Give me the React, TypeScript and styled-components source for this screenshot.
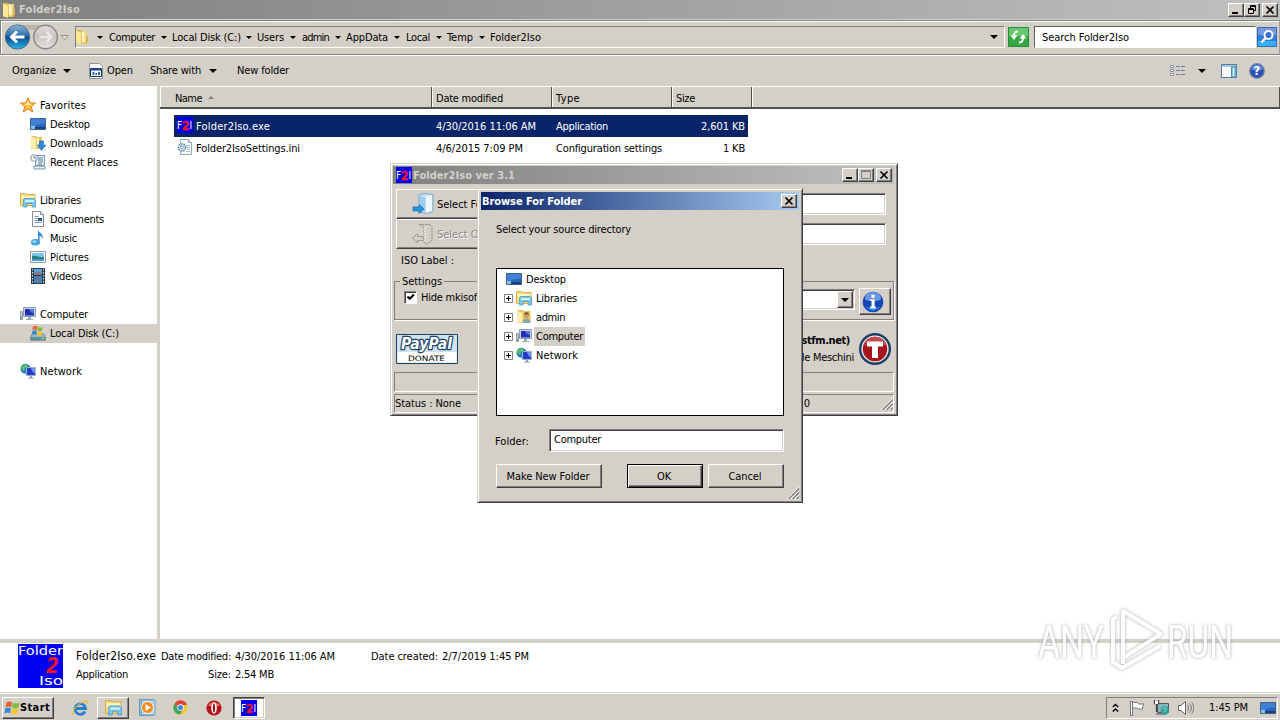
import React, { useLayoutEffect, useRef } from "react";
import styled, { createGlobalStyle, css } from "styled-components";

const face = "#d4d0c8";

const GlobalStyle = createGlobalStyle`
  * {
    box-sizing: border-box;
  }

  body {
    margin: 0;
    overflow: hidden;
    background: #fff;
    color: #000;
    font: 11px/13px "DejaVu Sans Condensed", "DejaVu Sans", sans-serif;
  }

  svg {
    display: block;
    flex: none;
  }
`;

/* ---------- text ---------- */

const LabelText = styled.span<{ $bold?: boolean; $size?: number }>`
  flex: none;
  align-self: center;
  white-space: nowrap;
  font-weight: ${(p) => (p.$bold ? 700 : 400)};
  font-size: ${(p) => p.$size || 11}px;
`;

type LabelProps = {
  w?: number;
  bold?: boolean;
  size?: number;
  children: string;
};

// spreads the letters so the label takes exactly w pixels
const Label = ({ w, bold, size, children }: LabelProps) => {
  const ref = useRef<HTMLSpanElement>(null);

  useLayoutEffect(() => {
    const el = ref.current;
    if (!el || !w) return;
    el.style.letterSpacing = "0px";
    const gap = (w - el.getBoundingClientRect().width) / children.length;
    el.style.letterSpacing = `${gap}px`;
  }, [w, children]);

  return (
    <LabelText ref={ref} $bold={bold} $size={size}>
      {children}
    </LabelText>
  );
};

/* ---------- icons ---------- */

type IconProps = { size?: number };

const FolderIcon = ({ size = 16 }: IconProps) => (
  <svg width={size} height={size} viewBox="0 0 16 16">
    <path d="M2 1h5l1 1h5v13H2z" fill="#dcb64c" />
    <path d="M7 2h6v11l-5 2z" fill="#f0d67c" />
    <path d="M2 1.500l5 2V16l-5-2z" fill="#f9e795" />
    <path d="M8 3h2.500v10H8z" fill="#fff6c4" />
    <path d="M12 7h2v6l-2 1z" fill="#dcb64c" />
  </svg>
);

const StarIcon = () => (
  <svg width="16" height="16" viewBox="0 0 16 16">
    <path
      d="M8 .8l2 5 5.400.400-4.200 3.500 1.500 5.300L8 12l-4.700 3 1.500-5.300L.6 6.200 6 5.800z"
      fill="#fdc04a"
      stroke="#e07f1a"
      strokeWidth="1"
    />
    <path d="M8 3.500l1.200 3.300 2.800.3-4 1.400-4-1.400 2.800-.3z" fill="#ffeeb0" />
  </svg>
);

const DesktopIcon = () => (
  <svg width="16" height="16" viewBox="0 0 16 16">
    <path d="M.5 2.500h15v11H.5z" fill="#2a66c0" stroke="#3f607f" />
    <path d="M1 3h14v5C10 7 5 9 1 12z" fill="#4080d6" />
    <path d="M1 11h14v2H1z" fill="#1b3f7d" />
    <path d="M1 10h4v3H1z" fill="#86c4e4" />
  </svg>
);

const DownloadsIcon = () => (
  <svg width="16" height="16" viewBox="0 0 16 16">
    <path d="M1 1h5l1 1h5v12H1z" fill="#e9c964" />
    <path d="M1 1.500l5 2V15l-5-2z" fill="#faeeb0" />
    <path d="M7 3h2v9H7z" fill="#fff3bd" />
    <path d="M9.500 6h4v4h2.300l-4.300 5.500L7.200 10h2.300z" fill="#2b8fe0" stroke="#1762a8" strokeWidth=".6" />
  </svg>
);

const RecentIcon = () => (
  <svg width="16" height="16" viewBox="0 0 16 16">
    <path d="M5.500 1.500h9v10h-9zM4 12h11v3H4z" fill="#e4edf3" stroke="#7d94a6" />
    <path d="M8 4h5M8 6h5M8 8h5M8 10h4" stroke="#5a83a8" />
    <circle cx="4" cy="4" r="3.300" fill="#f4f8fa" stroke="#8296a4" />
    <path d="M4 2v2h2" stroke="#456" fill="none" strokeWidth=".8" />
  </svg>
);

const LibrariesIcon = ({ size = 16 }: IconProps) => (
  <svg width={size} height={size} viewBox="0 0 16 16">
    <path d="M.5 1.500h5l1 1h8.500v11H.5z" fill="#f5dd83" stroke="#d5b04a" />
    <path d="M1 4h13.500v2.500H1z" fill="#fff3bd" />
    <path d="M3.500 8l1-1.500h9.500l1.500 1.500v7h-3.500v-3.500H7V15H3.500z" fill="#7cc6ea" stroke="#4a9cc9" strokeWidth=".8" />
    <path d="M5 8h9v2H5z" fill="#d0effc" />
  </svg>
);

const DocumentIcon = () => (
  <svg width="16" height="16" viewBox="0 0 16 16">
    <path d="M2.500.5h8l3 3v12h-11z" fill="#fff" stroke="#7f8fa3" />
    <path d="M10.500.5v3h3" fill="#dce6f0" stroke="#7f8fa3" />
    <path d="M4.500 5.500h4M4.500 7.500h3M4.500 9.500h3M4.500 11.500h7" stroke="#7d98c4" />
    <path d="M8 7h4v3H8z" fill="#2c5597" />
  </svg>
);

const MusicIcon = () => (
  <svg width="16" height="16" viewBox="0 0 16 16">
    <path d="M8 0c1 3 6 4 4.500 9-.4-2-1.500-3-3-3.300V12H8z" fill="#2d86cf" />
    <ellipse cx="5.500" cy="12.300" rx="4.500" ry="3.200" fill="#3da2e6" />
    <ellipse cx="4.500" cy="11.500" rx="2" ry="1.200" fill="#a4dcf8" />
  </svg>
);

const PicturesIcon = () => (
  <svg width="16" height="16" viewBox="0 0 16 16">
    <path d="M.5 2.500h15v11H.5z" fill="#fff" stroke="#8b98a3" />
    <path d="M2 4h12v8H2z" fill="#7cc4ea" />
    <path d="M2 7c4-1 8 2 12 1v2H2z" fill="#2b7c77" />
    <path d="M2 10h12v2H2z" fill="#3f9bd0" />
  </svg>
);

const VideosIcon = () => (
  <svg width="16" height="16" viewBox="0 0 16 16">
    <path d="M1 0h14v16H1z" fill="#2e3b49" />
    <path d="M4 1h8v6H4z" fill="#5ca3dc" />
    <path d="M4 8h8v7H4z" fill="#3d83c8" />
    <path d="M5 5l3-2 4 3v1H4zM5 12l3-2 3 3-3 1z" fill="#a75c50" opacity=".7" />
    <path d="M2.500 1v15M13.500 1v15" stroke="#dfe7ee" strokeDasharray="1.500 1.500" />
  </svg>
);

const ComputerIcon = () => (
  <svg width="16" height="16" viewBox="0 0 16 16">
    <path d="M.5 5.500h2v8h-2z" fill="#c3ccd2" stroke="#7c8a92" strokeWidth=".8" />
    <path d="M1 11h1v2H1z" fill="#5fae48" />
    <path d="M3.500 1.500h12v9h-12z" fill="#c9d3e2" stroke="#8d9bb0" />
    <path d="M5 3h9v6.500H5z" fill="#1d2fb5" />
    <path d="M9 3h5v4c-2 0-4-1-5-4z" fill="#5876e3" />
    <path d="M8 11h3v2h2v1H6v-1h2z" fill="#99a6b6" />
  </svg>
);

const DiskIcon = () => (
  <svg width="16" height="16" viewBox="0 0 16 16">
    <path d="M2 9l-1.500 3v3.500h15V12L14 9z" fill="#9fb8c0" stroke="#68828e" strokeWidth=".7" />
    <path d="M1 12h14v3H1z" fill="#5f9399" />
    <path d="M3 1.500c1.500-1 3-1 4.500 0L7 5.200c-1.500-.8-3-.8-4.600.1z" fill="#e9622c" />
    <path d="M8 1.800c1.500.8 3 .8 4.500.1L12 5.700c-1.500.8-3 .7-4.500-.2z" fill="#80bc3a" />
    <path d="M2.300 6c1.500-.9 3-.8 4.600 0l-.5 3.700c-1.500-.8-3-.8-4.600 0z" fill="#3b86d8" />
    <path d="M7.400 6.300c1.500.8 3 .9 4.600.1l-.5 3.700c-1.500.8-3 .7-4.600-.1z" fill="#f7c42c" />
    <path d="M12 13h2v1h-2z" fill="#a6f08c" />
  </svg>
);

const NetworkIcon = () => (
  <svg width="16" height="16" viewBox="0 0 16 16">
    <circle cx="5.500" cy="5.800" r="5" fill="#1f82b8" />
    <path d="M3 2c2-1 5-1 5 1L5 5 4 8 1 5zM6 7l3 1-2 3z" fill="#5cc06a" />
    <path d="M6.500 4.500h9v8h-9z" fill="#2340c4" stroke="#9db0d2" />
    <path d="M11 5h4v5c-2 0-3-2-4-5z" fill="#6d92ee" />
    <path d="M10 13h2v1.500h2v1H8v-1h2z" fill="#8fa0b6" />
  </svg>
);

const UserFolderIcon = () => (
  <svg width="16" height="16" viewBox="0 0 16 16">
    <path d="M1.500 1h5l1 1h7v12h-13z" fill="#e7c45d" />
    <path d="M1.500 2l5 2v11l-5-2z" fill="#fbefb0" />
    <circle cx="10.500" cy="6.500" r="2.400" fill="#c79a6a" />
    <path d="M8 5.500c0-3 5-3 5 0l-2.500-.6z" fill="#69492c" />
    <path d="M6.500 14c0-6 8-6 8 0z" fill="#8ba9a4" />
  </svg>
);

const IniIcon = () => (
  <svg width="16" height="16" viewBox="0 0 16 16">
    <path d="M3.500.5h8l3 3v12h-11z" fill="#f4f8fb" stroke="#9aa8b6" />
    <path d="M11.500.5v3h3" fill="#dbe7ef" stroke="#9aa8b6" />
    <path d="M9 6.500h4M10 8.500h3M10 10.500h3M9 12.500h4" stroke="#b4c3d3" />
    <circle cx="5" cy="8.500" r="3.600" fill="#cfe2ef" stroke="#6f94b5" strokeWidth="1.600" strokeDasharray="1.700 .9" />
    <circle cx="5" cy="8.500" r="1.400" fill="#fff" stroke="#6f94b5" strokeWidth=".8" />
  </svg>
);

const AppIcon = () => (
  <svg width="16" height="16" viewBox="0 0 16 16">
    <path d="M0 0h16v16H0z" fill="#0000f0" />
    <g fontFamily="DejaVu Sans Condensed, sans-serif">
      <text x="0" y="11.500" fontSize="10" fill="#fff">F</text>
      <text x="5" y="12.500" fontSize="12" fontWeight="700" fill="#f0102c" stroke="#f0102c" strokeWidth=".4" textLength="7.500" lengthAdjust="spacingAndGlyphs">2</text>
      <text x="12.500" y="11.500" fontSize="10" fill="#fff">I</text>
    </g>
  </svg>
);

const OpenIcon = () => (
  <svg width="16" height="16" viewBox="0 0 16 16">
    <path d="M1.500.5h10l3 3v12h-13z" fill="#fff" stroke="#8d949c" />
    <path d="M2.500 5.500h11v8h-11z" fill="#fff" stroke="#14306f" />
    <path d="M3 5h10v2.500H3z" fill="#1c3f92" />
    <path d="M4.500 9h2v3h-2zM7.500 10h1.500v2H7.500zM10 9h2v3h-2z" fill="#3464b4" />
  </svg>
);

const ViewIcon = () => (
  <svg width="17" height="16" viewBox="0 0 17 16">
    <g fill="#fff" stroke="#87919c">
      <path d="M.5 2.500h3v2h-3zM.5 6.500h3v2h-3zM.5 10.500h3v2h-3z" />
    </g>
    <path d="M6 3.500h4M11 3.500h4M6 7.500h4M11 7.500h4M6 11.500h4M11 11.500h4" stroke="#6c7e96" />
  </svg>
);

const PaneIcon = () => (
  <svg width="16" height="16" viewBox="0 0 16 16">
    <path d="M.5 1.500h15v13H.5z" fill="#fff" stroke="#4d7da6" />
    <path d="M1 2h14v2H1z" fill="#a5c7dd" />
    <path d="M10.500 4v10H15V4z" fill="#84c5e2" stroke="#4d8fb5" />
    <path d="M12 5h1v8h-1z" fill="#d7f3ff" />
  </svg>
);

const HelpIcon = () => (
  <svg width="16" height="16" viewBox="0 0 16 16">
    <circle cx="8" cy="8" r="7.300" fill="#2a50b8" stroke="#7886a6" strokeWidth="1.200" />
    <path d="M2.500 6a5.600 5 0 0 1 11 0c-3 2-8 2-11 0z" fill="#6f93e0" />
    <text x="8" y="12.300" textAnchor="middle" fontSize="12" fontWeight="700" fill="#fff" fontFamily="DejaVu Sans Condensed, sans-serif">?</text>
  </svg>
);

const BackForward = () => (
  <svg width="66" height="28" viewBox="0 0 66 28">
    <defs>
      <linearGradient id="back" x1="0" y1="0" x2="0" y2="1">
        <stop offset="0" stopColor="#8fb6d6" />
        <stop offset=".45" stopColor="#2b6dab" />
        <stop offset=".5" stopColor="#0c4a8b" />
        <stop offset="1" stopColor="#2bb8ea" />
      </linearGradient>
      <linearGradient id="fwd" x1="0" y1="0" x2="0" y2="1">
        <stop offset="0" stopColor="#e2e0dc" />
        <stop offset=".5" stopColor="#c5c2bd" />
        <stop offset="1" stopColor="#e8e6e2" />
      </linearGradient>
    </defs>
    <path d="M14 2h28v5H14z" fill="#b7b4ae" />
    <circle cx="12.500" cy="14" r="12.200" fill="url(#back)" stroke="#4c6380" strokeWidth=".8" />
    <path d="M19.500 14H7M12 8.500L6.500 14l5.500 5.500" stroke="#fff" strokeWidth="3" fill="none" />
    <circle cx="40.500" cy="14" r="11.800" fill="url(#fwd)" stroke="#898681" strokeWidth="1.400" />
    <path d="M34.500 14H46M41.500 9l5 5-5 5" stroke="#e9e7e3" strokeWidth="2.600" fill="none" />
    <path d="M56 12.500h7l-3.500 4z" fill="#efede9" stroke="#918e88" />
  </svg>
);

const RefreshIcon = () => (
  <svg width="21" height="20" viewBox="0 0 21 20">
    <path d="M0 0h21v20H0z" fill="#35a843" />
    <path d="M1 1h19v8H1z" fill="#69c86d" />
    <path d="M.5.5h20v19H.5z" fill="none" stroke="#2a8b3a" />
    <path d="M10 4.500C7 4.500 6 6 6 9" stroke="#fff" strokeWidth="2" fill="none" />
    <path d="M2.500 8.500h7L6 13z" fill="#fff" />
    <path d="M11 15.500c3 0 4-1.500 4-4.500" stroke="#fff" strokeWidth="2" fill="none" />
    <path d="M11.500 11.500h7L15 7z" fill="#fff" />
  </svg>
);

const SearchIcon = () => (
  <svg width="20" height="20" viewBox="0 0 20 20">
    <path d="M0 0h20v20H0z" fill="#2f80dc" />
    <path d="M0 0h20v8H0z" fill="#7898dc" />
    <path d="M0 14h20v6H0z" fill="#35b0ee" />
    <path d="M.5.5h19v19H.5z" fill="none" stroke="#3868b8" />
    <circle cx="11.500" cy="8" r="4" fill="#3d6cc8" stroke="#fff" strokeWidth="2" />
    <path d="M8.500 11L4.500 15.500" stroke="#fff" strokeWidth="2.600" />
  </svg>
);

const ArrowFolder = ({ disabled }: { disabled?: boolean }) => (
  <svg width="24" height="24" viewBox="0 0 24 24">
    {disabled ? (
      <g fill="none" stroke="#8a8781" strokeDasharray="2 1">
        <path d="M8 2.500h11l2 2v14l-5 3.500-3-1.500V5l-4-2z" />
        <path d="M1.500 16l5-4v2.500H12v4H6.500V21z" />
        <path d="M14 5v15" stroke="#fff" />
      </g>
    ) : (
      <>
        <path d="M8 2.500l6-1 8 1v17l-7 2-7-2z" fill="#bfe0f5" stroke="#7aa9cc" />
        <path d="M15 4.500l6-1.500v16l-6 2z" fill="#eef8fe" />
        <path d="M9 4l5 2v14l-5-2z" fill="#9ccbec" />
        <path d="M2 15h6v-2.500l5 4.500-5 4.500V19H2z" fill="#2694e0" stroke="#1a6cae" strokeWidth=".7" />
      </>
    )}
  </svg>
);

const InfoIcon = () => (
  <svg width="22" height="22" viewBox="0 0 24 24">
    <circle cx="12" cy="12" r="11.300" fill="#1747b6" />
    <path d="M3 9a9 8 0 0 1 18 0c-5 3-13 3-18 0z" fill="#6b97e2" />
    <path d="M4 17c4 6 12 6 16 0-4 2-12 2-16 0z" fill="#2f83ec" />
    <path d="M10.200 4h3.600v3.300h-3.600zM9 9h4.800v8H15v2H9v-2h1.400v-6H9z" fill="#fff" />
  </svg>
);

const TrustLogo = () => (
  <svg width="32" height="32" viewBox="0 0 32 32">
    <circle cx="16" cy="16" r="16" fill="#1b3c64" />
    <circle cx="16" cy="16" r="13.600" fill="#f4f4f6" />
    <circle cx="16" cy="16" r="12.300" fill="#a5161d" />
    <path d="M5 12a11.500 11.500 0 0 1 22 0z" fill="#c5484b" />
    <path d="M8 8.500h16v5h-5V25h-6V13.500H8z" fill="#fff" />
  </svg>
);

const PayPalBadge = () => (
  <svg width="62" height="30" viewBox="0 0 62 30">
    <path d="M.5.5h61v29H.5z" fill="#cfe4f0" stroke="#1b4268" />
    <path d="M1.500 18h59v10.500h-59z" fill="#fff" />
    <text x="5" y="15" fontSize="15" fontWeight="700" fontStyle="italic" fontFamily="DejaVu Sans, sans-serif" fill="#fff" stroke="#1d4468" strokeWidth="2.600" strokeLinejoin="round" paintOrder="stroke" textLength="51" lengthAdjust="spacingAndGlyphs">PayPal</text>
    <text x="12" y="26.500" fontSize="7.500" fontFamily="DejaVu Sans, sans-serif" fill="#000" textLength="37" lengthAdjust="spacingAndGlyphs">DONATE</text>
  </svg>
);

const LargeAppIcon = () => (
  <svg width="45" height="44" viewBox="0 0 45 44">
    <path d="M0 0h45v44H0z" fill="#0000f2" />
    <g fontFamily="DejaVu Sans, sans-serif" fontSize="13" fill="#fff">
      <text x="0" y="10.500" textLength="45" lengthAdjust="spacingAndGlyphs">Folder</text>
      <text x="21" y="40.500" textLength="24" lengthAdjust="spacingAndGlyphs">Iso</text>
    </g>
    <text x="28" y="29" fontSize="22" fontWeight="700" fontStyle="italic" fontFamily="DejaVu Sans Condensed, sans-serif" fill="#ee1428" textLength="13" lengthAdjust="spacingAndGlyphs">2</text>
  </svg>
);

const WindowsFlag = () => (
  <svg width="16" height="16" viewBox="0 0 16 16">
    <path d="M2.500 2.500c2-1.300 3.700-1.200 5.500-.2L7.200 7.200c-2-1-3.600-.9-5.700.2z" fill="#e8602c" />
    <path d="M8.800 2.700c2 1.100 4 1.100 6.700-.3l-1 5.200c-2.300 1.300-4.300 1.200-6.500.1z" fill="#82bd3c" />
    <path d="M1.300 8.300c2-1.100 3.700-1 5.700 0l-.8 5c-2-1-3.700-.9-5.700.1z" fill="#3c84d8" />
    <path d="M7.900 8.700c2.200 1 4.200 1.100 6.400 0l-1 5c-2 1.100-4 1-6.200-.1z" fill="#f8c62e" />
  </svg>
);

const IeIcon = () => (
  <svg width="18" height="18" viewBox="0 0 18 18">
    <path d="M14 12.500a5.300 5.300 0 1 1 .6-3H5.500" fill="none" stroke="#2580d0" strokeWidth="2.800" />
    <path d="M1.500 16.500C-1 13 8 2 15 1.300c3 0 1.500 3.500.5 4.700.8-3-1.500-4.500-7-.5-4.500 3.500-8 9-5 9.500z" fill="#f0bd35" />
  </svg>
);

const MediaIcon = () => (
  <svg width="17" height="17" viewBox="0 0 17 17">
    <path d="M.5.5h14v16H.5z" fill="#8cc2e8" stroke="#5a95c4" />
    <path d="M2.500 1h13.500v15H2.500z" fill="#b6d9f0" stroke="#6fa3cc" />
    <circle cx="8.500" cy="8.500" r="6" fill="#f28b1a" stroke="#fff" strokeWidth=".8" />
    <path d="M6.500 5l5.500 3.500L6.500 12z" fill="#fff" />
  </svg>
);

const ChromeIcon = () => (
  <svg width="15" height="15" viewBox="0 0 16 16">
    <circle cx="8" cy="8" r="7.500" fill="#f8c932" />
    <path d="M8 8L1.300 4.400A7.500 7.500 0 0 1 15 5.300H8z" fill="#dc4437" />
    <path d="M1.300 4.400A7.500 7.500 0 0 0 7.500 15.500L10.500 9.500 8 8z" fill="#3ea455" />
    <circle cx="8" cy="8" r="3.500" fill="#fff" />
    <circle cx="8" cy="8" r="2.700" fill="#4384e8" />
  </svg>
);

const OperaIcon = () => (
  <svg width="16" height="16" viewBox="0 0 16 16">
    <circle cx="8" cy="8" r="7.600" fill="#b5121b" />
    <path d="M2 6a6.500 6 0 0 1 12 0z" fill="#e26b6b" />
    <ellipse cx="8" cy="8" rx="2.800" ry="5.700" fill="#fff" />
    <ellipse cx="8" cy="8" rx="1.100" ry="4.600" fill="#9b0d15" />
  </svg>
);

const ChevronsIcon = () => (
  <svg width="7" height="10" viewBox="0 0 7 10">
    <path d="M.8 4l2.700-2.600L6.200 4M.8 8.500l2.700-2.600 2.700 2.600" fill="none" stroke="#000" strokeWidth="1.400" />
  </svg>
);

const FlagIcon = () => (
  <svg width="16" height="16" viewBox="0 0 16 16">
    <path d="M1.500 1.500h2v14h-2z" fill="#fff" stroke="#666" strokeWidth=".9" />
    <path d="M3.500 2.500h5l1 1.500h5.500l-1.500 2.500v2.500H9L8 8H3.500z" fill="#fff" stroke="#666" strokeWidth=".9" />
  </svg>
);

const TrayNetIcon = () => (
  <svg width="17" height="17" viewBox="0 0 17 17">
    <path d="M4.500 4.500h11v9h-11z" fill="#7fb6bd" stroke="#555" />
    <path d="M3 14h9v2H3z" fill="#888" />
    <path d="M1.500 1v3.500h4V1M3.500 4.500V13" stroke="#444" fill="none" strokeWidth="1.300" />
    <path d="M2 2h3v3H2z" fill="#fff" />
    <circle cx="12" cy="11.500" r="4.300" fill="#339d9b" />
    <path d="M9.500 10c2-2 4-1 4 0s-2 1-2 3" stroke="#a9e4c0" fill="none" />
  </svg>
);

const SpeakerIcon = () => (
  <svg width="17" height="16" viewBox="0 0 17 16">
    <path d="M1.500 5.500H4L8.500 1.500v13L4 10.500H1.500z" fill="#fff" stroke="#666" />
    <path d="M10.500 5c1.500 2 1.500 4 0 6M12.500 3.500c2.500 3 2.500 6 0 9M14.500 2c3 4 3 8 0 12" fill="none" stroke="#777" />
  </svg>
);

const Grip = () => (
  <svg width="12" height="12" viewBox="0 0 12 12">
    <path d="M0 12L12 0M4 12l8-8M8 12l4-4" stroke="#fff" />
    <path d="M1.500 12L12 1.500M5.500 12L12 5.500M9.500 12L12 9.500" stroke="#808080" strokeWidth="1.300" />
  </svg>
);

const Mark = styled.svg`
  overflow: visible;
  opacity: 0.85;
  filter: drop-shadow(0 0 1.5px rgba(120, 120, 120, 0.55))
    drop-shadow(0 0 1.5px rgba(150, 150, 150, 0.3));
`;

const Watermark = () => (
  <Mark width="210" height="76" viewBox="0 0 210 76">
    <g fontFamily="Roboto, sans-serif" fontSize="46" fill="#fff">
      <text x="8" y="54" textLength="66" lengthAdjust="spacingAndGlyphs">ANY</text>
      <text x="137" y="54" textLength="66" lengthAdjust="spacingAndGlyphs">RUN</text>
    </g>
    <g fill="none" stroke="#fff" strokeWidth="4" strokeLinejoin="round">
      <path d="M93 60V7l38 23-40 25" />
      <path d="M87 13l-4 2v43l9 6 38-22" />
    </g>
  </Mark>
);

/* ---------- shared parts ---------- */

const raised = css`
  background: ${face};
  border: 1px solid;
  border-color: #fff #404040 #404040 #fff;
  box-shadow: inset -1px -1px 0 #808080;
`;

const sunken = css`
  border: 1px solid;
  border-color: #808080 #fff #fff #808080;
`;

const Caret = styled.i<{ $big?: boolean }>`
  flex: none;
  border: solid transparent;
  border-width: ${(p) => (p.$big ? "4px 4px 0" : "3px 3px 0")};
  border-top-color: #000;
`;

const TitleBar = styled.div<{ $active?: boolean; $h?: number }>`
  display: flex;
  align-items: center;
  height: ${(p) => p.$h || 18}px;
  flex: none;
  color: ${(p) => (p.$active ? "#fff" : face)};
  background: ${(p) =>
    p.$active
      ? "linear-gradient(90deg, #0a246a, #a6caf0)"
      : "linear-gradient(90deg, #808080, #c0c0c0)"};
`;

const Caption = styled.button`
  ${raised}
  display: flex;
  align-items: center;
  justify-content: center;
  width: 16px;
  height: 14px;
  padding: 0;
`;

const Captions = styled.div<{ $mr?: number }>`
  display: flex;
  margin-left: auto;
  margin-right: ${(p) => p.$mr || 2}px;

  ${Caption}:last-child {
    margin-left: 2px;
  }
`;

const CaptionGlyph = ({ kind }: { kind: "min" | "max" | "restore" | "close" }) => (
  <svg width="10" height="10" viewBox="0 0 10 10" fill="none" stroke="#000">
    {kind === "min" && <path d="M1 8h6" strokeWidth="2" />}
    {kind === "max" && <path d="M.5 1.500h9M.5.500h9v8h-9z" stroke="#808080" />}
    {kind === "restore" && <path d="M3.500 3V.5h5v5H7M3 1.500h6M1.500 3.500h5v5h-5zM1 4.500h6" />}
    {kind === "close" && <path d="M1.500 1.500l7 7M8.500 1.500l-7 7" strokeWidth="1.700" />}
  </svg>
);

const Spacer = styled.div<{ $w?: number }>`
  ${(p) => (p.$w ? `flex: none; width: ${p.$w}px;` : "flex: 1;")}
`;

/* ---------- explorer ---------- */

const Desktop = styled.div`
  position: relative;
  display: flex;
  flex-direction: column;
  width: 1280px;
  height: 720px;
  overflow: hidden;
  background: ${face};
`;

const NavBar = styled.div`
  display: flex;
  align-items: center;
  height: 35px;
  margin-top: 1px;
  padding: 0 2px 1px 4px;
  border: 1px solid #808080;
  border-right-color: #a0a0a0;
  box-shadow: inset 1px 1px 0 #fff, 0 1px 0 #fff;
  flex: none;
`;

const AddressBar = styled.div`
  ${sunken}
  display: flex;
  align-items: center;
  width: 930px;
  height: 22px;
  margin-left: 4px;
`;

const AddressFolder = styled.div`
  margin-left: -2px;
  margin-right: 1px;
`;

const CrumbArrow = styled.span<{ $w: number }>`
  display: flex;
  flex: none;
  justify-content: center;
  width: ${(p) => p.$w}px;
`;

const RefreshButton = styled.div`
  margin-left: auto;
`;

const SearchField = styled.div`
  border: 1px solid;
  border-color: #606060 #fff #fff #606060;
  display: flex;
  align-items: center;
  width: 222px;
  height: 22px;
  margin: 0 1px 0 5px;
  padding-left: 7px;
  background: #fff;
`;

const Toolbar = styled.div`
  display: flex;
  align-items: center;
  height: 31px;
  padding: 0 15px 0 12px;
  flex: none;
`;

const Main = styled.div`
  display: flex;
  height: 553px;
  flex: none;
`;

const Sidebar = styled.div`
  width: 160px;
  padding-top: 10px;
  background: linear-gradient(90deg, #fff 157px, ${face} 157px);
  flex: none;
`;

const SideGroup = styled.div`
  margin-bottom: 19px;
`;

const SideRow = styled.div<{ $child?: boolean; $selected?: boolean }>`
  display: flex;
  align-items: center;
  gap: 4px;
  height: 19px;
  padding-left: ${(p) => (p.$child ? 30 : 20)}px;
  background: ${(p) => (p.$selected ? face : "transparent")};

  > svg {
    margin-top: -2px;
  }
`;

const FilePane = styled.div`
  flex: 1;
  background: #fff;
`;

const HeaderRow = styled.div`
  display: flex;
  height: 23px;
  background: ${face};
  border-top: 1px solid #fff;
  border-bottom: 2px solid #505050;
`;

const HeaderCell = styled.div<{ $w: number; $pad?: number }>`
  display: flex;
  align-items: center;
  gap: 6px;
  width: ${(p) => p.$w}px;
  padding: 2px 0 0 ${(p) => p.$pad || 3}px;
  border-left: 1px solid #fff;
  border-right: 1px solid #505050;
`;

const SortMark = styled.i`
  margin-top: -2px;
  border: solid transparent;
  border-width: 0 3px 3px;
  border-bottom-color: #808080;
`;

const FileList = styled.div`
  padding: 6px 0 0 14px;
`;

const FileRow = styled.div<{ $selected?: boolean }>`
  display: grid;
  grid-template-columns: 262px 120px 120px 69px;
  align-items: center;
  width: 574px;
  height: 22px;
  color: ${(p) => (p.$selected ? "#fff" : "#000")};
  background: ${(p) => (p.$selected ? "#0a246a" : "transparent")};
`;

const FileCell = styled.div<{ $end?: boolean }>`
  display: flex;
  align-items: center;
  gap: 3px;
  justify-content: ${(p) => (p.$end ? "flex-end" : "flex-start")};
`;

const NameCell = styled(FileCell)`
  padding-left: 3px;

  > svg {
    margin-top: -2px;
  }
`;

const DetailsPane = styled.div`
  display: flex;
  height: 53px;
  padding: 1px 0 0 18px;
  border-top: 4px solid ${face};
  background: #fff;
  flex: none;
`;

const DetailsColumn = styled.div<{ $w: number; $ml: number }>`
  width: ${(p) => p.$w}px;
  margin-left: ${(p) => p.$ml}px;
  padding-top: 3px;
`;

const DetailsLine = styled.div<{ $indent?: number }>`
  display: flex;
  align-items: center;
  gap: 4px;
  height: 18px;
  padding-left: ${(p) => p.$indent || 0}px;
`;

const crumbs: [string, number, number][] = [
  ["Computer", 46, 18],
  ["Local Disk (C:)", 69, 17],
  ["Users", 27, 16],
  ["admin", 27, 18],
  ["AppData", 42, 17],
  ["Local", 24, 18],
  ["Temp", 26, 17],
  ["Folder2Iso", 51, 17],
];

type SideItem = { icon: React.ReactNode; text: string; w: number; selected?: boolean };

const sideGroups: SideItem[][] = [
  [
    { icon: <StarIcon />, text: "Favorites", w: 46 },
    { icon: <DesktopIcon />, text: "Desktop", w: 40 },
    { icon: <DownloadsIcon />, text: "Downloads", w: 53 },
    { icon: <RecentIcon />, text: "Recent Places", w: 68 },
  ],
  [
    { icon: <LibrariesIcon />, text: "Libraries", w: 41 },
    { icon: <DocumentIcon />, text: "Documents", w: 54 },
    { icon: <MusicIcon />, text: "Music", w: 27 },
    { icon: <PicturesIcon />, text: "Pictures", w: 39 },
    { icon: <VideosIcon />, text: "Videos", w: 32 },
  ],
  [
    { icon: <ComputerIcon />, text: "Computer", w: 48 },
    { icon: <DiskIcon />, text: "Local Disk (C:)", w: 69, selected: true },
  ],
  [{ icon: <NetworkIcon />, text: "Network", w: 42 }],
];

const Explorer = () => (
  <>
    <TitleBar $h={19}>
      <Spacer $w={1} />
      <FolderIcon />
      <Spacer $w={2} />
      <Label w={61} bold>Folder2Iso</Label>
      <Captions>
        <Caption><CaptionGlyph kind="min" /></Caption>
        <Caption><CaptionGlyph kind="restore" /></Caption>
        <Caption><CaptionGlyph kind="close" /></Caption>
      </Captions>
    </TitleBar>

    <NavBar>
      <BackForward />
      <AddressBar>
        <AddressFolder><FolderIcon /></AddressFolder>
        {crumbs.map(([text, w, arrow]) => (
          <React.Fragment key={text}>
            <CrumbArrow $w={arrow}><Caret /></CrumbArrow>
            <Label w={w}>{text}</Label>
          </React.Fragment>
        ))}
        <Spacer />
        <Caret $big />
        <Spacer $w={6} />
      </AddressBar>
      <RefreshButton><RefreshIcon /></RefreshButton>
      <SearchField>
        <Label w={87}>Search Folder2Iso</Label>
      </SearchField>
      <SearchIcon />
    </NavBar>

    <Toolbar>
      <Label w={44}>Organize</Label>
      <Spacer $w={7} />
      <Caret $big />
      <Spacer $w={17} />
      <OpenIcon />
      <Spacer $w={3} />
      <Label w={26}>Open</Label>
      <Spacer $w={17} />
      <Label w={51}>Share with</Label>
      <Spacer $w={8} />
      <Caret $big />
      <Spacer $w={20} />
      <Label w={52}>New folder</Label>
      <Spacer />
      <ViewIcon />
      <Spacer $w={11} />
      <Caret $big />
      <Spacer $w={15} />
      <PaneIcon />
      <Spacer $w={12} />
      <HelpIcon />
    </Toolbar>

    <Main>
      <Sidebar>
        {sideGroups.map((group) => (
          <SideGroup key={group[0].text}>
            {group.map((item, i) => (
              <SideRow key={item.text} $child={i > 0} $selected={item.selected}>
                {item.icon}
                <Label w={item.w}>{item.text}</Label>
              </SideRow>
            ))}
          </SideGroup>
        ))}
      </Sidebar>
      <FilePane>
        <HeaderRow>
          <HeaderCell $w={272} $pad={14}>
            <Label w={27}>Name</Label>
            <SortMark />
          </HeaderCell>
          <HeaderCell $w={120}><Label w={67}>Date modified</Label></HeaderCell>
          <HeaderCell $w={120}><Label w={24}>Type</Label></HeaderCell>
          <HeaderCell $w={80}><Label w={19}>Size</Label></HeaderCell>
          <HeaderCell $w={528}>{null}</HeaderCell>
        </HeaderRow>
        <FileList>
          <FileRow $selected>
            <NameCell><AppIcon /><Label w={74}>Folder2Iso.exe</Label></NameCell>
            <FileCell><Label w={100}>4/30/2016 11:06 AM</Label></FileCell>
            <FileCell><Label w={52}>Application</Label></FileCell>
            <FileCell $end><Label w={44}>2,601 KB</Label></FileCell>
          </FileRow>
          <FileRow>
            <NameCell><IniIcon /><Label w={104}>Folder2IsoSettings.ini</Label></NameCell>
            <FileCell><Label w={87}>4/6/2015 7:09 PM</Label></FileCell>
            <FileCell><Label w={106}>Configuration settings</Label></FileCell>
            <FileCell $end><Label w={22}>1 KB</Label></FileCell>
          </FileRow>
        </FileList>
      </FilePane>
    </Main>

    <DetailsPane>
      <LargeAppIcon />
      <DetailsColumn $w={84} $ml={13}>
        <DetailsLine><Label w={80} size={12}>Folder2Iso.exe</Label></DetailsLine>
        <DetailsLine><Label w={52}>Application</Label></DetailsLine>
      </DetailsColumn>
      <DetailsColumn $w={210} $ml={1}>
        <DetailsLine><Label w={70}>Date modified:</Label><Label w={100}>4/30/2016 11:06 AM</Label></DetailsLine>
        <DetailsLine $indent={47}><Label w={23}>Size:</Label><Label w={39}>2.54 MB</Label></DetailsLine>
      </DetailsColumn>
      <DetailsColumn $w={160} $ml={0}>
        <DetailsLine><Label w={67}>Date created:</Label><Label w={87}>2/7/2019 1:45 PM</Label></DetailsLine>
      </DetailsColumn>
    </DetailsPane>
  </>
);

/* ---------- taskbar ---------- */

const TaskbarBox = styled.div`
  display: flex;
  align-items: center;
  height: 28px;
  padding: 2px 2px 0;
  border-top: 1px solid ${face};
  box-shadow: inset 0 1px 0 #fff;
  flex: none;
`;

const StartButton = styled.div`
  ${raised}
  display: flex;
  align-items: center;
  width: 52px;
  height: 22px;
  padding-left: 1px;
`;

const TaskSlot = styled.div<{ $state?: "open" | "active" }>`
  display: flex;
  align-items: center;
  justify-content: center;
  width: 32px;
  height: 22px;
  ${(p) => p.$state === "open" && raised}
  ${(p) =>
    p.$state === "active" &&
    css`
      background: #fff;
      border: 1px solid;
      border-color: #404040 #fff #fff #404040;
      box-shadow: inset 1px 1px 0 #808080, inset -1px -1px 0 ${face};
    `}
`;

const Tray = styled.div`
  ${sunken}
  display: flex;
  align-items: center;
  width: 172px;
  height: 22px;
  margin-left: auto;
  padding-left: 5px;
`;

const Taskbar = () => (
  <TaskbarBox>
    <StartButton>
      <WindowsFlag />
      <Label w={30} bold>Start</Label>
    </StartButton>
    <Spacer $w={10} />
    <TaskSlot><IeIcon /></TaskSlot>
    <Spacer $w={1} />
    <TaskSlot $state="open"><LibrariesIcon size={17} /></TaskSlot>
    <Spacer $w={2} />
    <TaskSlot><MediaIcon /></TaskSlot>
    <Spacer $w={1} />
    <TaskSlot><ChromeIcon /></TaskSlot>
    <Spacer $w={2} />
    <TaskSlot><OperaIcon /></TaskSlot>
    <Spacer $w={3} />
    <TaskSlot $state="active"><AppIcon /></TaskSlot>
    <Tray>
      <ChevronsIcon />
      <Spacer $w={10} />
      <FlagIcon />
      <Spacer $w={8} />
      <TrayNetIcon />
      <Spacer $w={7} />
      <SpeakerIcon />
      <Spacer $w={15} />
      <Label w={39}>1:45 PM</Label>
      <Spacer $w={12} />
      <DesktopIcon />
    </Tray>
  </TaskbarBox>
);

/* ---------- Folder2Iso window ---------- */

const Window = styled.div<{ $x: number; $y: number; $w: number; $h: number }>`
  position: absolute;
  left: ${(p) => p.$x}px;
  top: ${(p) => p.$y}px;
  width: ${(p) => p.$w}px;
  height: ${(p) => p.$h}px;
  display: flex;
  flex-direction: column;
  padding: 2px 3px 2px 2px;
  background: ${face};
  border: 1px solid;
  border-color: ${face} #404040 #404040 ${face};
  box-shadow: inset 1px 1px 0 #fff, inset -1px -1px 0 #808080;
`;

const WindowBody = styled.div`
  display: flex;
  flex-direction: column;
  flex: 1;
  padding: 5px 0 0 1px;
`;

const PathRow = styled.div`
  display: flex;
  align-items: center;
  height: 30px;
  padding: 0 8px 0 2px;
`;

const PathButton = styled.div<{ $disabled?: boolean }>`
  ${raised}
  display: flex;
  align-items: center;
  gap: 2px;
  width: 120px;
  height: 30px;
  padding-left: 14px;
  ${(p) =>
    p.$disabled &&
    css`
      color: #8a8781;
      text-shadow: 1px 1px 0 #fff;
    `}
`;

const Field = styled.div<{ $h: number; $pad?: number }>`
  display: flex;
  flex: 1;
  height: ${(p) => p.$h}px;
  padding: 0 0 ${(p) => p.$pad || 0}px 4px;
  background: #fff;
  border: 1px solid;
  border-color: #808080 #fff #fff #808080;
  box-shadow: inset 1px 1px 0 #404040, inset -1px -1px 0 ${face};
`;

const IsoRow = styled.div`
  display: flex;
  align-items: center;
  height: 22px;
  padding-left: 7px;
`;

const SettingsBox = styled.fieldset`
  display: flex;
  align-items: flex-start;
  height: 45px;
  margin: 4px 0 0;
  padding: 0 2px 0 9px;
  border: 1px solid #808080;
  box-shadow: 1px 1px 0 #fff;
  min-width: 0;

  legend {
    padding: 0 2px;
    margin-left: -4px;
    line-height: 13px;
  }
`;

const CheckBox = styled.div`
  display: flex;
  align-items: center;
  justify-content: center;
  width: 13px;
  height: 13px;
  margin: 3px 4px 0 0;
  background: #fff;
  border: 1px solid;
  border-color: #808080 #fff #fff #808080;
  box-shadow: inset 1px 1px 0 #404040;
`;

const CheckLabel = styled.div`
  margin-top: 3px;
  width: 240px;
`;

const ComboBox = styled(Field)`
  margin: 1px 4px 0 0;
  padding: 1px;
  justify-content: flex-end;
`;

const ComboButton = styled.div`
  ${raised}
  display: flex;
  align-items: center;
  justify-content: center;
  width: 16px;
  height: 17px;
`;

const InfoButton = styled.div`
  ${raised}
  display: flex;
  align-items: center;
  justify-content: center;
  width: 32px;
  height: 27px;
  padding-right: 4px;
`;

const CreditRow = styled.div`
  display: flex;
  align-items: center;
  height: 50px;
  padding: 8px 3px 0 2px;
`;

const Credits = styled.div`
  display: flex;
  flex-direction: column;
  gap: 4px;
  margin: 0 5px 0 auto;
`;

const CreditLine = styled.div<{ $pr?: number }>`
  display: flex;
  justify-content: flex-end;
  padding-right: ${(p) => p.$pr || 0}px;
`;

const StatusPanel = styled.div<{ $h: number }>`
  ${sunken}
  display: flex;
  align-items: center;
  height: ${(p) => p.$h}px;
  margin-top: 2px;
`;

const FolderToIsoWindow = () => (
  <Window $x={390} $y={163} $w={508} $h={253}>
    <TitleBar>
      <Spacer $w={3} />
      <AppIcon />
      <Spacer $w={1} />
      <Label w={102} bold>Folder2Iso ver 3.1</Label>
      <Captions>
        <Caption><CaptionGlyph kind="min" /></Caption>
        <Caption><CaptionGlyph kind="max" /></Caption>
        <Caption><CaptionGlyph kind="close" /></Caption>
      </Captions>
    </TitleBar>
    <WindowBody>
      <PathRow>
        <PathButton><ArrowFolder /><Label w={64}>Select Folder</Label></PathButton>
        <Field $h={22} />
      </PathRow>
      <PathRow>
        <PathButton $disabled><ArrowFolder disabled /><Label w={68}>Select Output</Label></PathButton>
        <Field $h={22} />
      </PathRow>
      <IsoRow><Label w={53}>ISO Label :</Label></IsoRow>
      <SettingsBox>
        <legend><Label w={40}>Settings</Label></legend>
        <CheckBox>
          <svg width="9" height="9" viewBox="0 0 9 9">
            <path d="M1.500 3.500l2.200 2.300L8 1.500" fill="none" stroke="#000" strokeWidth="2" />
          </svg>
        </CheckBox>
        <CheckLabel><Label w={61}>Hide mkisofs</Label></CheckLabel>
        <ComboBox $h={21}><ComboButton><Caret $big /></ComboButton></ComboBox>
        <InfoButton><InfoIcon /></InfoButton>
      </SettingsBox>
      <CreditRow>
        <PayPalBadge />
        <Credits>
          <CreditLine $pr={4}><Label w={64} bold>trustfm.net)</Label></CreditLine>
          <CreditLine><Label w={77}>Davide Meschini</Label></CreditLine>
        </Credits>
        <TrustLogo />
      </CreditRow>
      <StatusPanel $h={20} />
      <StatusPanel $h={19}>
        <Label w={66}>Status : None</Label>
        <Spacer />
        <Label>0</Label>
        <Spacer $w={71} />
        <Grip />
      </StatusPanel>
    </WindowBody>
  </Window>
);

/* ---------- Browse For Folder dialog ---------- */

const Dialog = styled(Window)`
  padding: 3px 3px 2px;
`;

const DialogBody = styled.div`
  display: flex;
  flex-direction: column;
  flex: 1;
  padding: 13px 15px 0;
`;

const Prompt = styled.div`
  display: flex;
`;

const Tree = styled.div`
  height: 148px;
  margin-top: 32px;
  padding-top: 1px;
  background: #fff;
  border: 1px solid #000;
`;

const TreeRow = styled.div<{ $root?: boolean }>`
  display: flex;
  align-items: center;
  height: 19px;
  padding-left: ${(p) => (p.$root ? 9 : 7)}px;
  gap: 2px;

  > svg {
    margin-top: -1px;
  }
`;

const PlusBox = styled.svg`
  margin-right: 1px;
`;

const TreeLabel = styled.div<{ $selected?: boolean }>`
  display: flex;
  align-items: center;
  height: 19px;
  padding: 0 2px;
  background: ${(p) => (p.$selected ? face : "transparent")};
`;

const FolderRow = styled.div`
  display: flex;
  align-items: center;
  height: 23px;
  margin-top: 13px;

  > :first-child {
    margin: 2px 20px 0 -1px;
  }
`;

const ButtonRow = styled.div`
  display: flex;
  margin-top: 12px;
  gap: 5px;
`;

const PushButton = styled.button<{ $w: number; $default?: boolean }>`
  ${raised}
  display: flex;
  align-items: center;
  justify-content: center;
  width: ${(p) => p.$w}px;
  height: 24px;
  padding: 0 2px 0 0;
  font: inherit;
  ${(p) =>
    p.$default &&
    css`
      border-color: #000;
      box-shadow: inset 1px 1px 0 #fff, inset -1px -1px 0 #404040, inset -2px -2px 0 #808080;
    `}
`;

const DialogGrip = styled.div`
  position: absolute;
  right: 3px;
  bottom: 3px;
`;

const treeItems = [
  { icon: <LibrariesIcon />, text: "Libraries", w: 41 },
  { icon: <UserFolderIcon />, text: "admin", w: 29 },
  { icon: <ComputerIcon />, text: "Computer", w: 47, selected: true },
  { icon: <NetworkIcon />, text: "Network", w: 42 },
];

const BrowseDialog = () => (
  <Dialog $x={477} $y={188} $w={326} $h={315}>
    <TitleBar $active>
      <Spacer $w={1} />
      <Label w={100} bold>Browse For Folder</Label>
      <Captions>
        <Caption><CaptionGlyph kind="close" /></Caption>
      </Captions>
    </TitleBar>
    <DialogBody>
      <Prompt><Label w={135}>Select your source directory</Label></Prompt>
      <Tree>
        <TreeRow $root>
          <DesktopIcon />
          <TreeLabel><Label w={40}>Desktop</Label></TreeLabel>
        </TreeRow>
        {treeItems.map((item) => (
          <TreeRow key={item.text}>
            <PlusBox width="9" height="9" viewBox="0 0 9 9">
              <path d="M.5.5h8v8h-8z" fill="#fff" stroke="#808080" />
              <path d="M2 4.500h5M4.500 2v5" stroke="#000" />
            </PlusBox>
            {item.icon}
            <TreeLabel $selected={item.selected}><Label w={item.w}>{item.text}</Label></TreeLabel>
          </TreeRow>
        ))}
      </Tree>
      <FolderRow>
        <Label w={34}>Folder:</Label>
        <Field $h={23} $pad={3}><Label w={47}>Computer</Label></Field>
      </FolderRow>
      <ButtonRow>
        <PushButton $w={106}><Label w={83}>Make New Folder</Label></PushButton>
        <Spacer />
        <PushButton $w={76} $default><Label w={14}>OK</Label></PushButton>
        <PushButton $w={76}><Label w={33}>Cancel</Label></PushButton>
      </ButtonRow>
    </DialogBody>
    <DialogGrip><Grip /></DialogGrip>
  </Dialog>
);

const Brand = styled.div`
  position: absolute;
  left: 1030px;
  top: 604px;
  pointer-events: none;
`;

const App = () => (
  <Desktop>
    <GlobalStyle />
    <Explorer />
    <Taskbar />
    <FolderToIsoWindow />
    <BrowseDialog />
    <Brand><Watermark /></Brand>
  </Desktop>
);

export default App;
